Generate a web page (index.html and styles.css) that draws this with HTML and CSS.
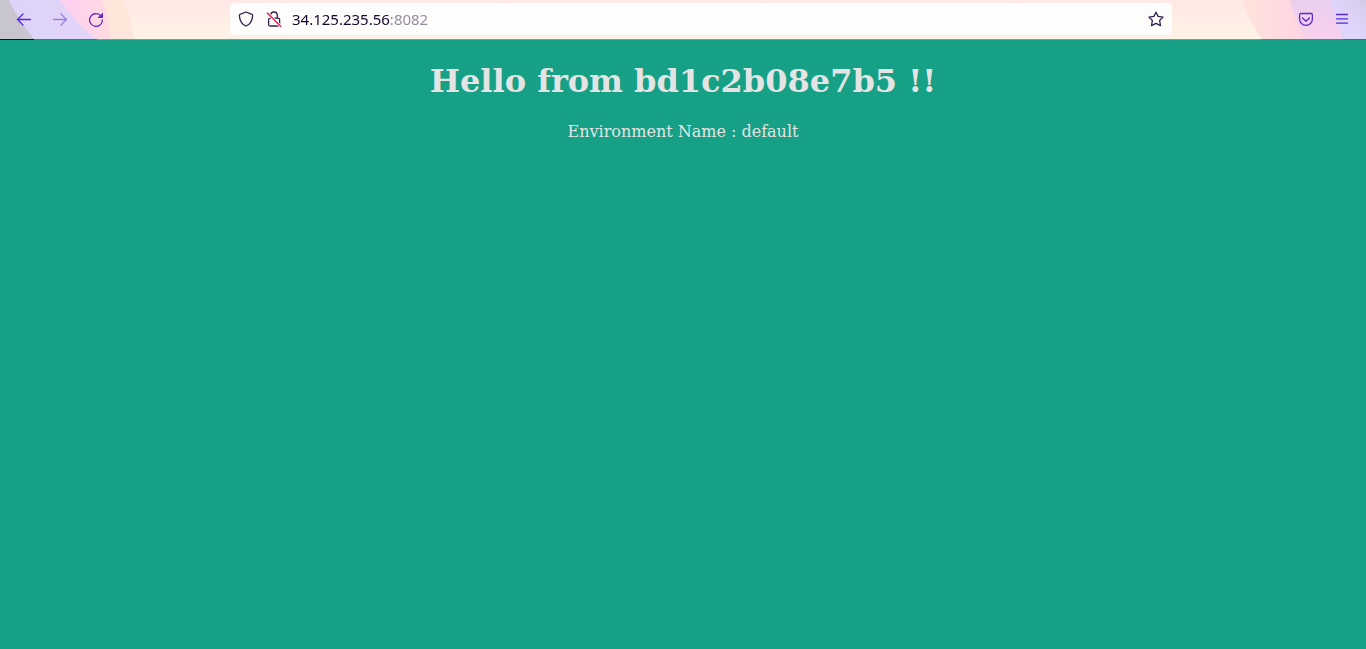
FILE: index.html
```
<!DOCTYPE html>
<html lang="en">
  <head>
    <meta charset="UTF-8" />
    <meta name="viewport" content="width=device-width, initial-scale=1.0" />
    <title>Hello from bd1c2b08e7b5</title>
    <link rel="stylesheet" href="styles.css">
  </head>
  <body>
    <header class="toolbar">
      <!-- theme artwork -->
      <svg class="art art-left" width="140" height="40" viewBox="0 0 140 40" aria-hidden="true">
        <defs>
          <linearGradient id="lilac" x1="0" y1="0" x2="1" y2="0">
            <stop offset="0" stop-color="#dcd2f8" />
            <stop offset="1" stop-color="#e4d5f8" />
          </linearGradient>
          <linearGradient id="pink" x1="0" y1="0" x2="1" y2="0">
            <stop offset="0.6" stop-color="#ffd0f0" />
            <stop offset="1" stop-color="#ffdae0" />
          </linearGradient>
        </defs>
        <path d="M0 0H123Q132 20 134 39H0Z" fill="#ffe6da" />
        <path d="M0 0H102Q109 18 111 39H0Z" fill="url(#pink)" />
        <path d="M0 0H60Q76 24 97 39H0Z" fill="url(#lilac)" />
        <path d="M0 0H9Q18 20 34 39H0Z" fill="#c9c5cf" />
        <path d="M34 39H97V40H34Z" fill="#7d55a8" />
        <path d="M0 39H34V40H0Z" fill="#17121f" />
      </svg>
      <svg class="art art-right" width="126" height="40" viewBox="0 0 126 40" aria-hidden="true">
        <defs>
          <linearGradient id="blush" x1="0" y1="0" x2="1" y2="0">
            <stop offset="0" stop-color="#ffe4dc" />
            <stop offset="0.5" stop-color="#ffd4e2" />
          </linearGradient>
          <linearGradient id="violet" x1="0" y1="1" x2="1" y2="0">
            <stop offset="0.4" stop-color="#e0d6fd" />
            <stop offset="1" stop-color="#d5cbe8" />
          </linearGradient>
          <linearGradient id="rose" x1="0" y1="0" x2="0" y2="1">
            <stop offset="0" stop-color="#ead0ee" />
            <stop offset="1" stop-color="#f8cfec" />
          </linearGradient>
        </defs>
        <path d="M2 0H126V39H22Q8 20 2 0Z" fill="url(#blush)" />
        <path d="M50 0H126V39H66Q54 20 50 0Z" fill="url(#rose)" />
        <path d="M90 0H126V39H103Q95 20 90 0Z" fill="url(#violet)" />
        <path d="M22 39H103V40H22Z" fill="#a8606e" />
        <path d="M103 39H126V40H103Z" fill="#6d4f9c" />
      </svg>

      <nav class="buttons">
        <button type="button" aria-label="Back">
          <svg width="16" height="16" viewBox="0 0 16 16"><path d="M14.500 8.500H2M7 3L1.500 8.500L7 14" /></svg>
        </button>
        <button type="button" aria-label="Forward" disabled>
          <svg width="16" height="16" viewBox="0 0 16 16"><path d="M1.500 8.500H14M9 3L14.500 8.500L9 14" /></svg>
        </button>
        <button type="button" aria-label="Reload">
          <svg width="16" height="16" viewBox="0 0 16 16"><path d="M12 4A6.400 6.400 0 1 0 14.400 9" /><path d="M15 1.500V7H9.500Z" class="solid" /></svg>
        </button>
      </nav>

      <div class="urlbar">
        <svg width="16" height="16" viewBox="0 0 16 16" aria-hidden="true"><path d="M8 1L14 3.300Q14.800 3.700 14.600 5C14.200 9.500 12 13.500 8 15C4 13.500 1.800 9.500 1.400 5Q1.200 3.700 2 3.300Z" /></svg>
        <svg width="16" height="16" viewBox="0 0 16 16" aria-hidden="true">
          <rect x="2.600" y="7.200" width="11" height="7.800" rx="1.500" />
          <path d="M4.700 7V4.300A3.300 3.300 0 0 1 11.300 4.300V7" />
          <path d="M1.300 2L14.600 15.300" class="halo" />
          <path d="M1.300 2L14.600 15.300" class="slash" />
        </svg>
        <input type="text" class="address" aria-label="Address" value="34.125.235.56:8082" spellcheck="false" />
        <button type="button" class="star" aria-label="Bookmark this page">
          <svg width="16" height="16" viewBox="0 0 16 16"><path d="M8 1.200L10.100 5.400L15 6.100L11.600 9.500L12.500 14.600L8 12.300L3.500 14.600L4.400 9.500L1 6.100L5.900 5.400Z" /></svg>
        </button>
      </div>

      <div class="buttons">
        <button type="button" aria-label="Save to Pocket">
          <svg width="16" height="16" viewBox="0 0 16 16"><path d="M3 2.500H13Q14.400 2.500 14.400 4V8A6.400 6.400 0 0 1 1.600 8V4Q1.600 2.500 3 2.500Z" /><path d="M4.500 7L8 10.300L11.500 7" /></svg>
        </button>
        <button type="button" aria-label="Menu">
          <svg width="16" height="16" viewBox="0 0 16 16"><path d="M2.500 3.500H13.500M2.500 7.800H13.500M2.500 12.200H13.500" /></svg>
        </button>
      </div>
    </header>

    <main>
      <h1>Hello from bd1c2b08e7b5 !!</h1>
      <p>Environment Name : default</p>
    </main>
  </body>
</html>
```
FILE: styles.css
```
body {
  margin: 0;
  min-height: 100vh;
  background: #16a085;
  color: #e4e4e4;
  font-family: "DejaVu Serif", serif;
}

/* browser toolbar */
.toolbar {
  position: relative;
  display: flex;
  align-items: center;
  box-sizing: border-box;
  height: 40px;
  padding: 0 6px 1px;
  background: linear-gradient(#ffe9e6, #fff2e4 36px);
  border-bottom: 1px solid #a38c7a;
}

.art {
  position: absolute;
  top: 0;
}

.art-left {
  left: 0;
}

.art-right {
  right: 0;
}

.buttons {
  position: relative;
  display: flex;
}

button {
  display: flex;
  align-items: center;
  justify-content: center;
  width: 36px;
  height: 32px;
  padding: 0;
  border: none;
  background: none;
  color: #592acb;
  cursor: pointer;
}

button:disabled {
  opacity: 0.5;
  cursor: default;
}

button svg,
.urlbar svg {
  flex: none;
  fill: none;
  stroke: currentColor;
  stroke-width: 1.3;
  stroke-linecap: round;
  stroke-linejoin: round;
}

svg .solid {
  fill: currentColor;
  stroke: none;
}

.urlbar {
  position: relative;
  display: flex;
  flex: 1;
  align-items: center;
  gap: 12px;
  height: 32px;
  min-width: 0;
  margin: 0 116px;
  padding-left: 8px;
  border-radius: 4px;
  background: #fffcfc;
  color: #2e2150;
}

.urlbar .halo {
  stroke: #fffcfc;
  stroke-width: 3;
}

.urlbar .slash {
  stroke: #e8194f;
}

/* the port is dimmed, the host is not */
.address {
  flex: 1;
  min-width: 0;
  height: 32px;
  margin-left: -2px;
  padding: 0;
  border: none;
  outline: none;
  background: linear-gradient(to right, #15082e 98px, #8f899c 98px);
  background-clip: text;
  -webkit-background-clip: text;
  color: transparent;
  font-family: "Noto Sans", sans-serif;
  font-size: 15px;
}

.star {
  width: 32px;
  color: #2e2150;
}

main {
  padding: 0 8px;
  text-align: center;
}

h1 {
  margin: 22px 0;
  font-size: 32px;
}

p {
  margin: 16px 0;
  font-size: 16px;
}
```
